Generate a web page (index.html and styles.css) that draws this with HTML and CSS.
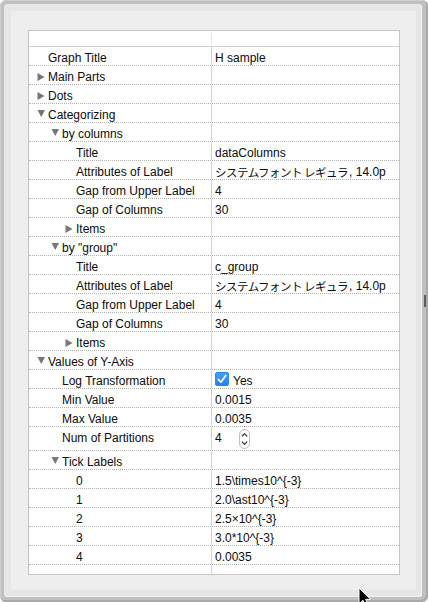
FILE: index.html
```html
<!DOCTYPE html>
<html>
<head>
<meta charset="utf-8">
<link rel="stylesheet" href="styles.css">
</head>
<body>
<div class="window">
  <div class="frame">
    <div class="panel">
      <div class="table">
        <div class="head"><div class="hname"></div><div></div></div>

        <div class="row"><div class="name">Graph Title</div><div class="val">H sample</div></div>
        <div class="row"><div class="name"><svg class="tog" viewBox="0 0 9 9"><polygon points="0.5,0 7.5,4 0.5,8"/></svg>Main Parts</div><div class="val"></div></div>
        <div class="row"><div class="name"><svg class="tog" viewBox="0 0 9 9"><polygon points="0.5,0 7.5,4 0.5,8"/></svg>Dots</div><div class="val"></div></div>
        <div class="row"><div class="name"><svg class="tog open" viewBox="0 0 9 9"><polygon points="0.5,0 8,0 4.25,7"/></svg>Categorizing</div><div class="val"></div></div>

        <div class="row"><div class="name l1"><svg class="tog open" viewBox="0 0 9 9"><polygon points="0.5,0 8,0 4.25,7"/></svg>by columns</div><div class="val"></div></div>
        <div class="row"><div class="name l2">Title</div><div class="val">dataColumns</div></div>
        <div class="row"><div class="name l2">Attributes of Label</div><div class="val"><span class="jp">システムフォント レギュラ</span>, 14.0p</div></div>
        <div class="row"><div class="name l2">Gap from Upper Label</div><div class="val">4</div></div>
        <div class="row"><div class="name l2">Gap of Columns</div><div class="val">30</div></div>
        <div class="row"><div class="name l2"><svg class="tog" viewBox="0 0 9 9"><polygon points="0.5,0 7.5,4 0.5,8"/></svg>Items</div><div class="val"></div></div>

        <div class="row"><div class="name l1"><svg class="tog open" viewBox="0 0 9 9"><polygon points="0.5,0 8,0 4.25,7"/></svg>by "group"</div><div class="val"></div></div>
        <div class="row"><div class="name l2">Title</div><div class="val">c_group</div></div>
        <div class="row"><div class="name l2">Attributes of Label</div><div class="val"><span class="jp">システムフォント レギュラ</span>, 14.0p</div></div>
        <div class="row"><div class="name l2">Gap from Upper Label</div><div class="val">4</div></div>
        <div class="row"><div class="name l2">Gap of Columns</div><div class="val">30</div></div>
        <div class="row"><div class="name l2"><svg class="tog" viewBox="0 0 9 9"><polygon points="0.5,0 7.5,4 0.5,8"/></svg>Items</div><div class="val"></div></div>

        <div class="row"><div class="name"><svg class="tog open" viewBox="0 0 9 9"><polygon points="0.5,0 8,0 4.25,7"/></svg>Values of Y-Axis</div><div class="val"></div></div>
        <div class="row"><div class="name l1">Log Transformation</div><div class="val"><span class="check"><svg viewBox="0 0 14 14"><path d="M3.3 7.4 L5.9 10.2 L10.8 3.6"/></svg></span>Yes</div></div>
        <div class="row"><div class="name l1">Min Value</div><div class="val">0.0015</div></div>
        <div class="row"><div class="name l1">Max Value</div><div class="val">0.0035</div></div>
        <div class="row tall"><div class="name l1">Num of Partitions</div><div class="val"><span class="num">4</span><svg class="stepper" viewBox="0 0 11 20"><rect x="0.5" y="0.5" width="10" height="19" rx="5" ry="5"/><path d="M3.2 7 L5.5 4.7 L7.8 7"/><path d="M3.2 13 L5.5 15.3 L7.8 13"/></svg></div></div>
        <div class="row"><div class="name l1"><svg class="tog open" viewBox="0 0 9 9"><polygon points="0.5,0 8,0 4.25,7"/></svg>Tick Labels</div><div class="val"></div></div>
        <div class="row"><div class="name l2">0</div><div class="val">1.5\times10^{-3}</div></div>
        <div class="row"><div class="name l2">1</div><div class="val">2.0\ast10^{-3}</div></div>
        <div class="row"><div class="name l2">2</div><div class="val">2.5×10^{-3}</div></div>
        <div class="row"><div class="name l2">3</div><div class="val">3.0*10^{-3}</div></div>
        <div class="row"><div class="name l2">4</div><div class="val">0.0035</div></div>

        <div class="fill"><div class="fname"></div><div></div></div>
      </div>
    </div>
  </div>
  <div class="grip"></div>
  <svg class="cursor" viewBox="0 0 14 22"><path d="M1 1 L1 17 L5 13.2 L7.8 19.8 L10.4 18.7 L7.7 12.3 L12.6 12.3 Z"/></svg>
</div>
</body>
</html>
```

FILE: styles.css
```css
html, body {
  margin: 0;
  padding: 0;
  background: #ffffff;
}

body {
  width: 428px;
  height: 602px;
  overflow: hidden;
  font-family: "Liberation Sans", Arial, "Noto Sans CJK JP", sans-serif;
  font-size: 12px;
  color: #0c0c0c;
}

.window {
  position: relative;
  width: 428px;
  height: 602px;
  box-sizing: border-box;
  padding: 4px 6px 5px 4px;
  border-radius: 6px;
  background: #c0c0c0;
  box-shadow: inset -2px -2px 0 #a9a9a9, inset 1px 1px 0 #cfcfcf;
}

.frame {
  height: 593px;
  box-sizing: border-box;
  padding: 7px 6px 7px 7px;
  background: #e6e6e6;
  border-radius: 3px;
  box-shadow: inset -1px -1px 0 #f3f3f3;
}

.panel {
  height: 579px;
  box-sizing: border-box;
  padding: 19px 16px 15px 17px;
  background: #eeeeee;
}

.table {
  height: 545px;
  box-sizing: border-box;
  border: 1px solid #c6c6c6;
  background: #ffffff;
  display: flex;
  flex-direction: column;
}

.head {
  flex: none;
  height: 16px;
  box-sizing: border-box;
  border-bottom: 1px solid #d2d2d2;
  display: grid;
  grid-template-columns: 183px 1fr;
}

.hname {
  margin: 2px 0;
  border-right: 1px solid #e6e6e6;
}

.row {
  flex: none;
  height: 19px;
  box-sizing: border-box;
  border-bottom: 1px dotted #b4b4b4;
  display: grid;
  grid-template-columns: 183px 1fr;
}

.row.tall {
  height: 24px;
}

.name {
  display: flex;
  align-items: flex-start;
  padding: 4px 0 0 19px;
  line-height: 14px;
  white-space: nowrap;
  border-right: 1px solid #d3d3d3;
}

.name.l1 { padding-left: 33px; }
.name.l2 { padding-left: 47px; }

.val {
  display: flex;
  align-items: flex-start;
  padding: 4px 0 0 3px;
  line-height: 14px;
  white-space: nowrap;
}

.jp {
  font-family: "Noto Sans CJK JP", sans-serif;
  font-size: 11.5px;
  letter-spacing: -0.5px;
  margin-right: 1px;
}

.tog {
  flex: none;
  width: 9px;
  height: 9px;
  margin: 3px 2px 0 -11px;
  fill: #777777;
}

.tog.open {
  margin-top: 2px;
}

.check {
  flex: none;
  width: 14px;
  height: 14px;
  margin: -2px 4px 0 0;
  border-radius: 3px;
  background: linear-gradient(#4aa3ff, #1f7ef2);
  box-shadow: inset 0 0 0 1px #2c86f0;
}

.check svg {
  display: block;
  width: 14px;
  height: 14px;
  fill: none;
  stroke: #ffffff;
  stroke-width: 1.7;
  stroke-linecap: round;
  stroke-linejoin: round;
}

.num {
  width: 24px;
  flex: none;
}

.stepper {
  flex: none;
  width: 11px;
  height: 20px;
  margin-top: -2px;
}

.stepper rect {
  fill: #ffffff;
  stroke: #bdbdbd;
  stroke-width: 1;
}

.stepper path {
  fill: none;
  stroke: #3a3a3a;
  stroke-width: 1.2;
  stroke-linecap: round;
  stroke-linejoin: round;
}

.fill {
  flex: 1;
  display: grid;
  grid-template-columns: 183px 1fr;
}

.fname {
  border-right: 1px solid #d3d3d3;
}

.grip {
  position: absolute;
  left: 424px;
  top: 295px;
  width: 2px;
  height: 12px;
  background: #5c5c5c;
}

.cursor {
  position: absolute;
  left: 358px;
  top: 587px;
  width: 14px;
  height: 22px;
  fill: #000000;
  stroke: #ffffff;
  stroke-width: 1;
  stroke-linejoin: round;
}
```
